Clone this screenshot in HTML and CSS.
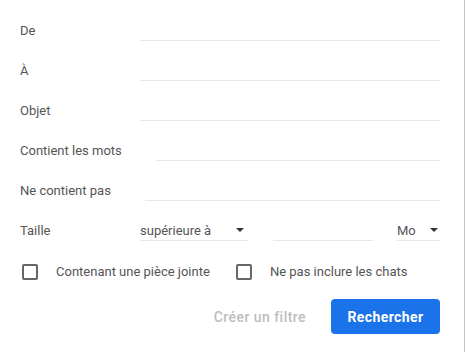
FILE: index.html
```html
<!DOCTYPE html>
<html lang="fr">
<head>
    <meta charset="UTF-8">
    <meta name="viewport" content="width=device-width, initial-scale=1.0">
    <title>Recherche avancée</title>
    <link rel="stylesheet" href="styles.css">
</head>
<body>
    <div class="search-panel">
        <div class="field-row">
            <label class="field-label" for="from">De</label>
            <input class="field-input" type="text" id="from">
        </div>
        <div class="field-row">
            <label class="field-label" for="to">À</label>
            <input class="field-input" type="text" id="to">
        </div>
        <div class="field-row">
            <label class="field-label" for="subject">Objet</label>
            <input class="field-input" type="text" id="subject">
        </div>
        <div class="field-row">
            <label class="field-label" for="hasWords">Contient les mots</label>
            <input class="field-input" type="text" id="hasWords">
        </div>
        <div class="field-row">
            <label class="field-label" for="notWords">Ne contient pas</label>
            <input class="field-input" type="text" id="notWords">
        </div>
        <div class="field-row">
            <span class="field-label">Taille</span>
            <div class="dropdown size-op">
                <span class="dropdown-text">supérieure à</span>
                <span class="dropdown-arrow"></span>
            </div>
            <input class="field-input size-value" type="text">
            <div class="dropdown size-unit">
                <span class="dropdown-text">Mo</span>
                <span class="dropdown-arrow"></span>
            </div>
        </div>

        <div class="check-row">
            <label class="check">
                <span class="check-box"></span>
                <span class="check-text">Contenant une pièce jointe</span>
            </label>
            <label class="check">
                <span class="check-box"></span>
                <span class="check-text">Ne pas inclure les chats</span>
            </label>
        </div>

        <div class="actions">
            <button class="btn-text" disabled>Créer un filtre</button>
            <button class="btn-primary">Rechercher</button>
        </div>
    </div>
</body>
</html>
```

FILE: styles.css
```css
:root {
    --label-color: #555555;
    --line-color: #e6e6e6;
    --accent: #1a73e8;
    --disabled: #bdbdbd;
}

body {
    margin: 0;
    background: #ffffff;
    font-family: Roboto, "Liberation Sans", Arial, sans-serif;
    font-size: 13px;
    color: var(--label-color);
}

.search-panel {
    width: 420px;
    height: 352px;
    padding: 1px 24px 0 20px;
    border-right: 1px solid #c4c4c4;
}

.field-row {
    display: flex;
    align-items: flex-end;
    height: 40px;
}

.field-label {
    min-width: 86px;
    margin-right: 34px;
    padding-bottom: 2px;
    line-height: 16px;
    white-space: nowrap;
}

.field-input {
    flex: 1;
    min-width: 0;
    height: 24px;
    padding: 0;
    border: none;
    border-bottom: 1px solid var(--line-color);
    outline: none;
    font-family: inherit;
    font-size: 13px;
    background: transparent;
}

.dropdown {
    display: flex;
    align-items: center;
    justify-content: space-between;
    height: 24px;
    padding-bottom: 1px;
    box-sizing: border-box;
    border-bottom: 1px solid var(--line-color);
}

.dropdown-text {
    line-height: 16px;
    padding-top: 5px;
}

.dropdown-arrow {
    width: 0;
    height: 0;
    margin-top: 4px;
    border-left: 4.5px solid transparent;
    border-right: 4.5px solid transparent;
    border-top: 4.5px solid #333333;
}

.size-op {
    width: 108px;
    padding-right: 4px;
}

.size-value {
    flex: none;
    width: 100px;
    margin-left: 25px;
}

.size-unit {
    width: 43px;
    margin-left: 24px;
    padding-right: 2px;
}

.check-row {
    display: flex;
    align-items: center;
    height: 30px;
    margin-top: 16px;
    padding-left: 2px;
}

.check {
    display: flex;
    align-items: center;
    margin-right: 26px;
}

.check-box {
    width: 12px;
    height: 12px;
    border: 2px solid #666666;
    border-radius: 2px;
    margin-right: 18px;
}

.check-text {
    line-height: 16px;
}

.actions {
    display: flex;
    justify-content: flex-end;
    align-items: center;
    margin-top: 12px;
}

.btn-text {
    border: none;
    background: none;
    padding: 0 25px 0 0;
    font-family: inherit;
    font-size: 14px;
    font-weight: 500;
    letter-spacing: 0.45px;
    color: var(--disabled);
}

.btn-primary {
    width: 109px;
    height: 35px;
    border: none;
    border-radius: 4px;
    background: var(--accent);
    color: #ffffff;
    font-family: inherit;
    font-size: 14px;
    font-weight: 700;
    letter-spacing: 0.4px;
}
```
